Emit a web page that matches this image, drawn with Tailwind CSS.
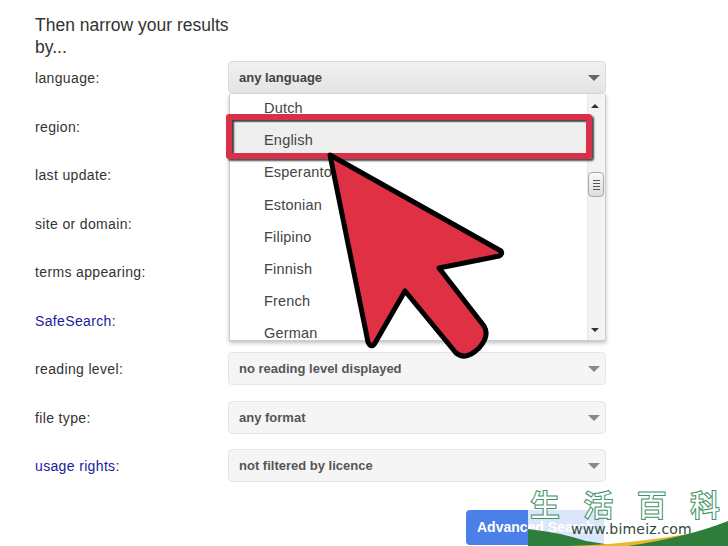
<!DOCTYPE html>
<html>
<head>
<meta charset="utf-8">
<script src="https://cdn.jsdelivr.net/npm/@tailwindcss/browser@4"></script>
</head>
<body class="bg-white">
<div class="relative w-[728px] h-[546px] overflow-hidden bg-white font-['Liberation_Sans',Arial,sans-serif] text-[#333]">
  <div class="pl-[35px] pt-[14px] w-[606px]">
    <h2 class="w-[200px] text-[17.5px] leading-[22px] font-normal text-[#333]">Then narrow your results by...</h2>
    <div class="grid grid-cols-[193px_1fr] mt-[5px]">
      <div class="h-[48.5px] pt-[5px] text-[14px] leading-[20px] tracking-[0.35px]">language:</div>
      <div class="h-[33px] mt-[-2px] rounded-sm border border-[#dcdcdc] bg-gradient-to-b from-[#f1f1f1] to-[#e4e4e4] pl-[10px] pr-[4px] pt-[1px] flex items-center justify-between text-[13px] font-bold text-[#444]">any language<span class="w-0 h-0 mr-[1px] border-x-[6px] border-x-transparent border-t-[6px] border-t-[#666]"></span></div>
      <div class="h-[48.5px] pt-[5px] text-[14px] leading-[20px] tracking-[0.35px]">region:</div><div></div>
      <div class="h-[48.5px] pt-[5px] text-[14px] leading-[20px] tracking-[0.35px]">last update:</div><div></div>
      <div class="h-[48.5px] pt-[5px] text-[14px] leading-[20px] tracking-[0.35px]">site or domain:</div><div></div>
      <div class="h-[48.5px] pt-[5px] text-[14px] leading-[20px] tracking-[0.35px]">terms appearing:</div><div></div>
      <div class="h-[48.5px] pt-[5px] text-[14px] leading-[20px] tracking-[0.35px] text-[#1a1a9c]">SafeSearch:</div><div></div>
      <div class="h-[48.5px] pt-[5px] text-[14px] leading-[20px] tracking-[0.35px]">reading level:</div>
      <div class="h-[33px] mt-[-2px] rounded-sm border border-[#e6e6e6] bg-[#f5f5f5] pl-[10px] pr-[4px] pt-[1px] flex items-center justify-between text-[13px] font-bold text-[#555]">no reading level displayed<span class="w-0 h-0 mr-[1px] border-x-[6px] border-x-transparent border-t-[6px] border-t-[#888]"></span></div>
      <div class="h-[48.5px] pt-[5px] text-[14px] leading-[20px] tracking-[0.35px]">file type:</div>
      <div class="h-[33px] mt-[-2px] rounded-sm border border-[#e6e6e6] bg-[#f5f5f5] pl-[10px] pr-[4px] pt-[1px] flex items-center justify-between text-[13px] font-bold text-[#555]">any format<span class="w-0 h-0 mr-[1px] border-x-[6px] border-x-transparent border-t-[6px] border-t-[#888]"></span></div>
      <div class="h-[48.5px] pt-[5px] text-[14px] leading-[20px] tracking-[0.35px] text-[#1a1a9c]">usage rights:</div>
      <div class="h-[33px] mt-[-2px] rounded-sm border border-[#e6e6e6] bg-[#f5f5f5] pl-[10px] pr-[4px] pt-[1px] flex items-center justify-between text-[13px] font-bold text-[#555]">not filtered by licence<span class="w-0 h-0 mr-[1px] border-x-[6px] border-x-transparent border-t-[6px] border-t-[#888]"></span></div>
    </div>
    <div class="flex justify-start ml-[431px] mt-[10px]">
      <button class="w-[138px] h-[35px] rounded-sm bg-[#4a80e8] text-left pl-[11px] text-[14px] font-bold text-white whitespace-nowrap">Advanced Search</button>
    </div>
  </div>

  <!-- open dropdown list -->
  <div class="absolute left-[229px] top-[94px] w-[377px] h-[247px] flex overflow-hidden bg-white border-x border-b border-[#ccc] shadow-[0_2px_4px_rgba(0,0,0,0.25)]">
    <ul class="flex-1 mt-[-2px] text-[14.5px] leading-[32.2px] tracking-[0.2px] text-[#444]">
      <li class="pl-[34px]">Dutch</li>
      <li class="pl-[34px] bg-[#eeeeee]">English</li>
      <li class="pl-[34px]">Esperanto</li>
      <li class="pl-[34px]">Estonian</li>
      <li class="pl-[34px]">Filipino</li>
      <li class="pl-[34px]">Finnish</li>
      <li class="pl-[34px]">French</li>
      <li class="pl-[34px]">German</li>
    </ul>
    <div class="relative w-[18px] bg-[#f3f3f3] border-l border-[#e8e8e8]">
      <span class="absolute left-[3px] top-[10px] w-0 h-0 border-x-[4px] border-x-transparent border-b-[4px] border-b-[#333]"></span>
      <div class="absolute left-[0px] top-[78px] w-[16px] h-[25px] rounded-sm border border-[#aaa] bg-gradient-to-b from-[#fafafa] to-[#dddddd] flex flex-col items-center justify-center gap-[2px]">
        <span class="w-[7px] h-[1px] bg-[#555]"></span><span class="w-[7px] h-[1px] bg-[#555]"></span><span class="w-[7px] h-[1px] bg-[#555]"></span><span class="w-[7px] h-[1px] bg-[#555]"></span>
      </div>
      <span class="absolute left-[3px] bottom-[8px] w-0 h-0 border-x-[4px] border-x-transparent border-t-[4px] border-t-[#333]"></span>
    </div>
  </div>

  <!-- red highlight box -->
  <div class="absolute left-[226px] top-[114px] w-[366px] h-[45px] rounded-[3px] border-[6px] border-[#d9304a] shadow-[inset_2px_2px_2px_rgba(0,0,0,0.75),2px_2px_2px_rgba(0,0,0,0.7)]"></div>

  <!-- big arrow -->
  <svg class="absolute left-0 top-0" width="728" height="546" viewBox="0 0 728 546" fill="none">
    <path d="M330 155 L501 251 Q503 254 499 256 L439 268 L484 326 Q490 336 479 348 Q466 361 456 353 L405 291 L375 343 Q371 349 368 342 Z" fill="#df3044" stroke="#000" stroke-width="5" stroke-linejoin="round"/>
  </svg>

  <!-- watermark -->
  <div class="absolute left-[528px] top-[487px] w-[200px] h-[59px] overflow-hidden bg-white/80">
    <div class="absolute left-[2px] top-0 w-[190px] flex justify-between font-['Noto_Sans_CJK_SC',sans-serif] text-[30px] leading-[32px] font-bold text-white [-webkit-text-stroke:1px_#3f9468]">
      <span>生</span><span>活</span><span>百</span><span>科</span>
    </div>
    <div class="absolute left-[43px] top-[32px] font-['DejaVu_Sans',sans-serif] text-[14px] leading-[20px] tracking-[0.2px] text-[#2f4a3a]">www.bimeiz.com</div>
    <svg class="absolute left-0 top-0" width="200" height="59" viewBox="0 0 200 59">
      <path d="M0 42 Q30 45 58 54 L90 59 L0 59 Z" fill="#2e7d3a"/>
      <path d="M40 59 Q95 58 165 46 L130 59 Z" fill="#e8b92c"/>
      <path d="M100 59 Q160 50 200 34 L200 59 Z" fill="#2e7d3a"/>
    </svg>
  </div>
</div>
</body>
</html>
